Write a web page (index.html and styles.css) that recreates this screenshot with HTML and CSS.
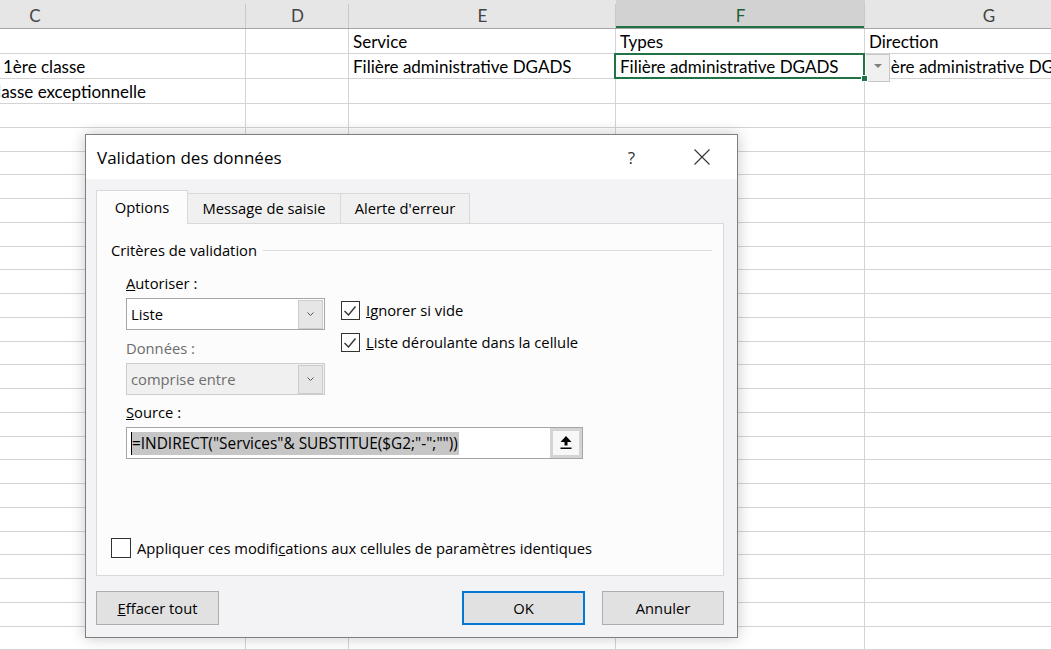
FILE: index.html
```html
<!DOCTYPE html>
<html lang="fr">
<head>
    <meta charset="UTF-8">
    <meta name="viewport" content="width=device-width, initial-scale=1.0">
    <title>Validation des données</title>
    <link rel="stylesheet" href="styles.css">
</head>
<body>
<div class="sheet">
    <!-- Column headers -->
    <div class="grid-row heads">
        <div class="head">C</div>
        <div class="head">D</div>
        <div class="head">E</div>
        <div class="head active">F</div>
        <div class="head">G</div>
    </div>

    <div class="grid-row">
        <div class="cell"></div>
        <div class="cell"></div>
        <div class="cell">Service</div>
        <div class="cell">Types</div>
        <div class="cell">Direction</div>
    </div>
    <div class="grid-row">
        <div class="cell spill">1ère classe</div>
        <div class="cell"></div>
        <div class="cell">Filière administrative DGADS</div>
        <div class="cell selected">Filière administrative DGADS<span class="fill-handle"></span></div>
        <div class="cell">Filière administrative DGADS</div>
    </div>
    <div class="grid-row">
        <div class="cell spill cut">classe exceptionnelle</div>
        <div class="cell"></div>
        <div class="cell"></div>
        <div class="cell"></div>
        <div class="cell"></div>
    </div>
    <div id="rows"></div>

    <!-- in-cell list button -->
    <div class="cell-dropdown"><span class="tri"></span></div>

    <!-- Data validation dialog -->
    <div class="dialog">
        <div class="dialog-title">
            <h1>Validation des données</h1>
            <span class="help">?</span>
            <svg class="close" width="16" height="16" viewBox="0 0 16 16">
                <path d="M0.5 0.5 L15.5 15.5 M15.5 0.5 L0.5 15.5" stroke="#333" stroke-width="1.1" fill="none"/>
            </svg>
        </div>

        <div class="tabs">
            <div class="tab active tab-options">Options</div>
            <div class="tab tab-message">Message de saisie</div>
            <div class="tab tab-alert">Alerte d'erreur</div>
        </div>

        <div class="panel">
            <div class="legend">Critères de validation</div>

            <div class="fields">
                <div class="top-fields">
                    <div class="left-col">
                        <div class="label"><u>A</u>utoriser :</div>
                        <div class="select">
                            <span class="select-text">Liste</span>
                            <span class="select-arrow">
                                <svg width="7" height="4" viewBox="0 0 7 4"><polyline points="0.5,0.5 3.5,3.5 6.5,0.5" fill="none" stroke="#555" stroke-width="1"/></svg>
                            </span>
                        </div>
                        <div class="label disabled gap">Données :</div>
                        <div class="select is-disabled">
                            <span class="select-text">comprise entre</span>
                            <span class="select-arrow">
                                <svg width="7" height="4" viewBox="0 0 7 4"><polyline points="0.5,0.5 3.5,3.5 6.5,0.5" fill="none" stroke="#555" stroke-width="1"/></svg>
                            </span>
                        </div>
                    </div>
                    <div class="right-col">
                        <div class="check-row">
                            <span class="check">
                                <svg width="17" height="17" viewBox="0 0 17 17"><polyline points="2.5,9 6.5,13 13.5,4.5" fill="none" stroke="#333" stroke-width="1.4"/></svg>
                            </span>
                            <span><u>I</u>gnorer si vide</span>
                        </div>
                        <div class="check-row second">
                            <span class="check">
                                <svg width="17" height="17" viewBox="0 0 17 17"><polyline points="2.5,9 6.5,13 13.5,4.5" fill="none" stroke="#333" stroke-width="1.4"/></svg>
                            </span>
                            <span><u>L</u>iste déroulante dans la cellule</span>
                        </div>
                    </div>
                </div>

                <div class="label source-label"><u>S</u>ource :</div>
                <div class="source">
                    <span class="caret"></span>
                    <span class="source-text">=INDIRECT("Services"&amp; SUBSTITUE($G2;"-";""))</span>
                    <span class="collapse-btn">
                        <svg width="12" height="14" viewBox="0 0 12 14">
                            <polygon points="6,0 0.5,6 11.5,6" fill="#000"/>
                            <rect x="4.5" y="5.5" width="3" height="4" fill="#000"/>
                            <rect x="0.5" y="11.5" width="11" height="1.5" fill="#000"/>
                        </svg>
                    </span>
                </div>
            </div>

            <div class="check-row apply">
                <span class="check big"></span>
                <span>Appliquer ces modifi<u>c</u>ations aux cellules de paramètres identiques</span>
            </div>
        </div>

        <div class="dialog-footer">
            <button class="btn"><u>E</u>ffacer tout</button>
            <button class="btn btn-ok">OK</button>
            <button class="btn btn-cancel">Annuler</button>
        </div>
    </div>
</div>

<script>
    // empty rows under the data
    const rows = document.getElementById("rows");
    for (let i = 0; i < 24; i++) {
        const row = document.createElement("div");
        row.className = "grid-row short";
        for (let j = 0; j < 5; j++) {
            const cell = document.createElement("div");
            cell.className = "cell";
            row.appendChild(cell);
        }
        rows.appendChild(row);
    }
</script>
</body>
</html>
```

FILE: styles.css
```css
body {
    margin: 0;
    background: #fff;
    font-family: Lato, "Liberation Sans", sans-serif;
    overflow: hidden;
}

.sheet {
    position: relative;
    width: 1051px;
    height: 650px;
    overflow: hidden;
}

/* grid */
.grid-row {
    display: grid;
    grid-template-columns: 422px 103px 267px 249px 248px;
    grid-template-rows: 100%;
    margin-left: -176px;
    height: 25px;
}

.grid-row.short {
    height: 23.75px;
}

.cell {
    position: relative;
    box-sizing: border-box;
    border-right: 1px solid #d4d4d4;
    border-bottom: 1px solid #d4d4d4;
    padding: 2px 0 0 4px;
    font-size: 17px;
    line-height: 22px;
    white-space: nowrap;
    color: #000;
}

.cell.spill {
    padding-left: 179px;
}

.cell.spill.cut {
    padding-left: 165px;
}

.heads {
    height: 29px;
    background: #e6e6e6;
    border-bottom: 1px solid #a6a6a6;
    box-sizing: border-box;
}

.head {
    position: relative;
    box-sizing: border-box;
    padding-top: 3px;
    text-align: center;
    font-size: 17px;
    line-height: 25px;
    color: #444;
}

.head::after {
    content: '';
    position: absolute;
    right: 0;
    top: 4px;
    bottom: 0;
    width: 1px;
    background: #c9c9c9;
}

.head.active {
    background: #d2d2d2;
    color: #1d5e38;
    box-shadow: inset 0 -2px 0 #217346;
}

.selected::after {
    content: '';
    position: absolute;
    left: -2px;
    top: -1px;
    right: -1px;
    bottom: -1px;
    border: 2px solid #217346;
}

.fill-handle {
    position: absolute;
    right: -4px;
    bottom: -4px;
    width: 5px;
    height: 5px;
    background: #217346;
    border: 1px solid #fff;
    z-index: 2;
}

.cell-dropdown {
    position: absolute;
    left: 866px;
    top: 54px;
    width: 24px;
    height: 28px;
    box-sizing: border-box;
    background: #f0f0f0;
    border: 1px solid #c6c6c6;
    border-left: none;
}

.cell-dropdown .tri {
    position: absolute;
    left: 8px;
    top: 9px;
    border-left: 4px solid transparent;
    border-right: 4px solid transparent;
    border-top: 4px solid #7f7f7f;
}

/* dialog */
.dialog {
    position: absolute;
    left: 85px;
    top: 134px;
    width: 653px;
    height: 504px;
    box-sizing: border-box;
    border: 1px solid #7f7f7f;
    background: #f3f2f5;
    box-shadow: 0 0 14px rgba(0, 0, 0, 0.22);
    font-family: "Open Sans", "Noto Sans", sans-serif;
    font-size: 14.75px;
    color: #000;
}

.dialog-title {
    height: 44px;
    background: #fff;
    display: flex;
    align-items: center;
    padding: 0 27px 0 11px;
}

.dialog-title h1 {
    flex: 1;
    margin: 0;
    font-size: 17px;
    font-weight: normal;
}

.help {
    font-size: 17px;
    color: #333;
    margin-right: 59px;
}

.tabs {
    display: flex;
    align-items: flex-end;
    height: 33px;
    margin: 11px 0 0 10px;
}

.tab {
    box-sizing: border-box;
    height: 30px;
    line-height: 29px;
    text-align: center;
    background: #f0f0f0;
    border: 1px solid #d9d9d9;
    border-bottom: none;
    margin-left: -1px;
}

.tab.active {
    height: 34px;
    line-height: 32px;
    background: #fcfcfc;
    margin-left: 0;
    margin-bottom: -1px;
    position: relative;
    z-index: 1;
}

.tab-options {
    width: 92px;
}

.tab-message {
    width: 154px;
}

.tab-alert {
    width: 130px;
}

.panel {
    box-sizing: border-box;
    height: 353px;
    margin: 0 13px 0 10px;
    padding: 16px 11px 0 14px;
    background: #fcfcfc;
    border: 1px solid #d9d9d9;
}

.legend {
    display: flex;
    align-items: center;
    line-height: 20px;
}

.legend::after {
    content: '';
    flex: 1;
    height: 1px;
    margin-left: 6px;
    background: #dcdcdc;
}

.fields {
    margin: 13px 0 0 15px;
}

.top-fields {
    display: flex;
    gap: 16px;
}

.left-col {
    width: 199px;
}

.label {
    line-height: 20px;
}

.label.gap {
    margin-top: 8px;
}

.label.disabled {
    color: #6d6d6d;
}

.select {
    box-sizing: border-box;
    display: flex;
    align-items: center;
    height: 32px;
    margin-top: 5px;
    padding-left: 4px;
    background: #fff;
    border: 1px solid #a5a5a5;
}

.select.is-disabled {
    background: #f0f0f0;
    border-color: #cccccc;
    color: #6d6d6d;
}

.select-text {
    flex: 1;
}

.select-arrow {
    box-sizing: border-box;
    display: flex;
    align-items: center;
    justify-content: center;
    width: 25px;
    height: 29px;
    margin-right: 1px;
    background: #e6e6e6;
    border: 1px solid #cccccc;
}

.right-col {
    padding-top: 27px;
}

.check-row {
    display: flex;
    align-items: center;
    gap: 6px;
    line-height: 20px;
}

.check-row.second {
    margin-top: 12px;
}

.check {
    box-sizing: border-box;
    display: flex;
    width: 19px;
    height: 19px;
    border: 1px solid #333;
    background: #fff;
}

.check.big {
    width: 20px;
    height: 20px;
}

.source-label {
    margin-top: 7px;
}

.source {
    box-sizing: border-box;
    display: flex;
    align-items: center;
    width: 457px;
    height: 32px;
    margin-top: 5px;
    padding-left: 4px;
    background: #fff;
    border: 1px solid #a5a5a5;
}

.caret {
    width: 1px;
    height: 23px;
    background: #000;
}

.source-text {
    background: #c6c6c6;
    font-size: 15.4px;
    line-height: 23px;
    padding-right: 1px;
}

.collapse-btn {
    box-sizing: border-box;
    display: flex;
    align-items: center;
    justify-content: center;
    width: 32px;
    height: 30px;
    margin-left: auto;
    background: #f7f7f7;
    border: 3px solid #d4d4d4;
}

.apply {
    margin-top: 79px;
}

.dialog-footer {
    display: flex;
    padding: 15px 13px 0 10px;
}

.btn {
    box-sizing: border-box;
    width: 123px;
    height: 34px;
    padding: 0;
    font-family: inherit;
    font-size: 14.75px;
    color: #000;
    background: #e1e1e1;
    border: 1px solid #adadad;
}

.btn-ok {
    margin-left: auto;
    border: 2px solid #0078d7;
}

.btn-cancel {
    width: 122px;
    margin-left: 17px;
}
```
